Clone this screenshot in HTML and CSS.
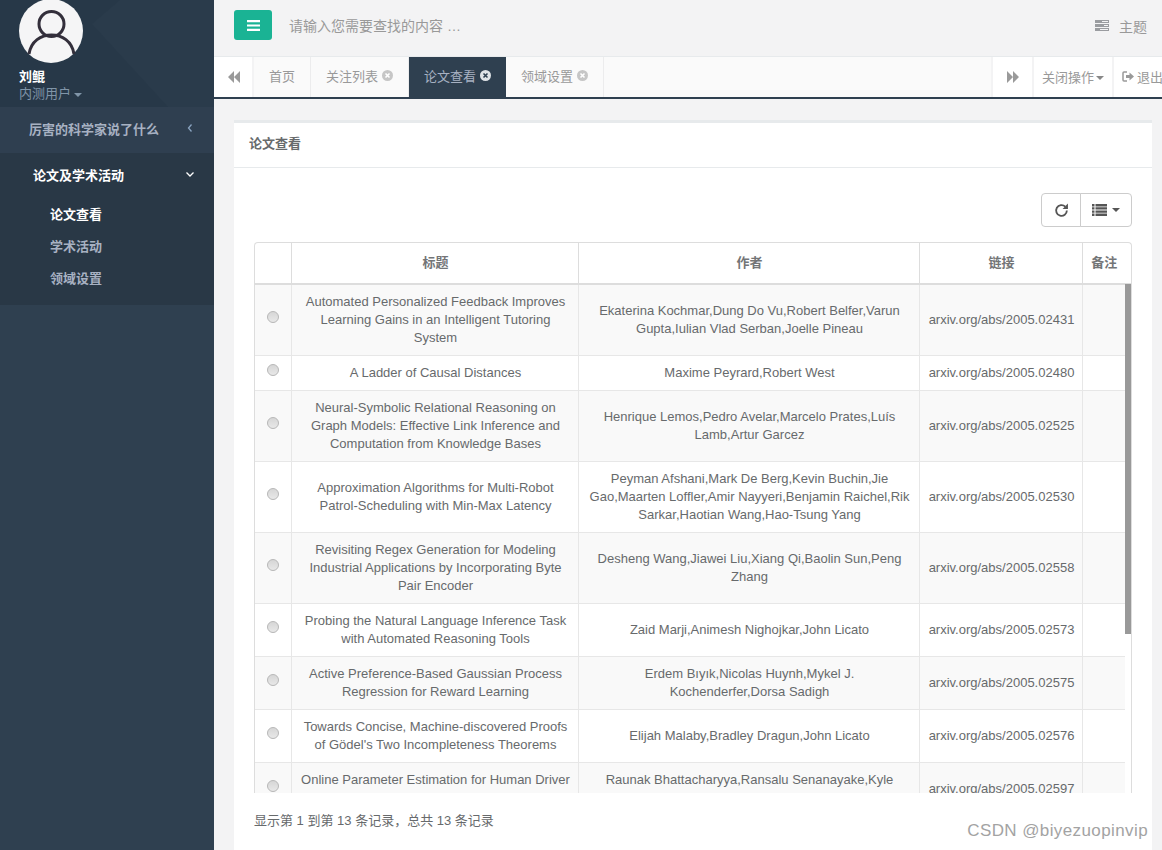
FILE: index.html
```html
<!DOCTYPE html>
<html lang="zh-CN">
<head>
<meta charset="utf-8">
<title>论文查看</title>
<link rel="stylesheet" href="styles.css">
</head>
<body>
<div class="app">
  <aside class="sidebar">
    <div class="profile">
      <svg class="shade" viewBox="0 0 214 107" width="214" height="107"><polygon points="92,24 120,0 214,0 214,107 168,107" fill="#2a3b4b"/></svg>
      <div class="avatar">
        <svg viewBox="0 0 64 64" width="64" height="64"><circle cx="32" cy="32" r="32" fill="#f5f5f6"/><circle cx="32.500" cy="25" r="12.500" fill="none" stroke="#332f3b" stroke-width="3"/><path d="M10 55 C12 42 22 36 32.500 36 C43 36 53 42 55 55" fill="none" stroke="#332f3b" stroke-width="3"/></svg>
      </div>
      <div class="user-name">刘鲲</div>
      <div class="user-role">内测用户<i class="caret"></i></div>
    </div>
    <div class="menu-top"><span>厉害的科学家说了什么</span>
      <svg viewBox="0 0 8 10" width="8" height="10"><path d="M5.500 1.500 2.500 5l3 3.500" fill="none" stroke="#8aa4c0" stroke-width="1.300"/></svg>
    </div>
    <div class="menu-group">
      <div class="menu-head"><span>论文及学术活动</span>
        <svg viewBox="0 0 10 8" width="10" height="8"><path d="M1.500 2.500 5 6l3.500-3.500" fill="none" stroke="#fff" stroke-width="1.300"/></svg>
      </div>
      <div class="menu-sub active">论文查看</div>
      <div class="menu-sub">学术活动</div>
      <div class="menu-sub">领域设置</div>
    </div>
  </aside>

  <main class="main">
    <header class="topbar">
      <button class="burger" type="button" aria-label="菜单">
        <svg viewBox="0 0 13 11" width="13" height="11"><path d="M0 0h13v2.200H0zM0 4.400h13v2.200H0zM0 8.800h13V11H0z" fill="#fff"/></svg>
      </button>
      <div class="search">请输入您需要查找的内容 …</div>
      <div class="theme">
        <svg viewBox="0 0 14 11" width="14" height="11"><path d="M0 0h14v3H0zM0 4h14v3H0zM0 8h14v3H0z" fill="#9a9ca0"/><path d="M7 1h6v1H7zM9 5h4v1H9zM5 9h8v1H5z" fill="#f3f3f4"/></svg>
        <span>主题</span>
      </div>
    </header>

    <nav class="tabs">
      <div class="tab-btn first">
        <svg viewBox="0 0 12 12" width="12" height="12"><path d="M6 0v12L0 6zM12 0v12L6 6z" fill="#9a9a9a"/></svg>
      </div>
      <div class="tab-list">
        <div class="tab home">首页</div>
        <div class="tab">关注列表<svg class="x" viewBox="0 0 11 11" width="11" height="11"><circle cx="5.500" cy="5.500" r="5.500" fill="#c6c6c6"/><path d="M3.500 3.500l4 4m0-4-4 4" stroke="#fff" stroke-width="1.600"/></svg></div>
        <div class="tab current">论文查看<svg class="x" viewBox="0 0 11 11" width="11" height="11"><circle cx="5.500" cy="5.500" r="5.500" fill="#dfe3e7"/><path d="M3.500 3.500l4 4m0-4-4 4" stroke="#2f4050" stroke-width="1.600"/></svg></div>
        <div class="tab">领域设置<svg class="x" viewBox="0 0 11 11" width="11" height="11"><circle cx="5.500" cy="5.500" r="5.500" fill="#c6c6c6"/><path d="M3.500 3.500l4 4m0-4-4 4" stroke="#fff" stroke-width="1.600"/></svg></div>
      </div>
      <div class="tab-btn last">
        <svg viewBox="0 0 12 12" width="12" height="12"><path d="M0 0v12l6-6zM6 0v12l6-6z" fill="#9a9a9a"/></svg>
      </div>
      <div class="tab-btn close-ops">关闭操作<i class="caret dark"></i></div>
      <div class="tab-btn logout">
        <svg viewBox="0 0 12 11" width="12" height="11"><path d="M5 1H2a1 1 0 0 0-1 1v7a1 1 0 0 0 1 1h3" fill="none" stroke="#999" stroke-width="1.500"/><path d="M4 4h3.500V1.500L12 5.500 7.500 9.500V7H4z" fill="#999"/></svg>
        <span>退出</span>
      </div>
    </nav>

    <section class="content">
      <div class="card">
        <div class="card-title">论文查看</div>
        <div class="card-body">
          <div class="toolbar">
            <button class="tool refresh" type="button" aria-label="刷新">
              <svg viewBox="0 0 14 14" width="15" height="15"><path d="M12 7a5 5 0 1 1-1.500-3.600" fill="none" stroke="#555" stroke-width="1.700"/><path d="M13 0.500v5H8z" fill="#555"/></svg>
            </button>
            <button class="tool columns" type="button" aria-label="列">
              <svg viewBox="0 0 15 12" width="15" height="12"><path d="M0 0h2.500v2.400H0zM0 3.200h2.500v2.400H0zM0 6.400h2.500v2.400H0zM0 9.600h2.500V12H0zM3.500 0H15v2.400H3.500zM3.500 3.200H15v2.400H3.500zM3.500 6.400H15v2.400H3.500zM3.500 9.600H15V12H3.500z" fill="#555"/></svg>
              <i class="caret darker"></i>
            </button>
          </div>

          <div class="grid">
            <table class="grid-head">
              <colgroup><col class="c-radio"><col class="c-title"><col class="c-author"><col class="c-link"><col></colgroup>
              <thead><tr><th></th><th>标题</th><th>作者</th><th>链接</th><th>备注</th></tr></thead>
            </table>
            <div class="grid-view">
              <table class="grid-body">
                <colgroup><col class="c-radio"><col class="c-title"><col class="c-author"><col class="c-link"><col></colgroup>
                <tbody>
                  <tr><td><i class="radio"></i></td><td>Automated Personalized Feedback Improves Learning Gains in an Intelligent Tutoring System</td><td>Ekaterina Kochmar,Dung Do Vu,Robert Belfer,Varun Gupta,Iulian Vlad Serban,Joelle Pineau</td><td>arxiv.org/abs/2005.02431</td><td></td></tr>
                  <tr><td><i class="radio"></i></td><td>A Ladder of Causal Distances</td><td>Maxime Peyrard,Robert West</td><td>arxiv.org/abs/2005.02480</td><td></td></tr>
                  <tr><td><i class="radio"></i></td><td>Neural-Symbolic Relational Reasoning on Graph Models: Effective Link Inference and Computation from Knowledge Bases</td><td>Henrique Lemos,Pedro Avelar,Marcelo Prates,Luís Lamb,Artur Garcez</td><td>arxiv.org/abs/2005.02525</td><td></td></tr>
                  <tr><td><i class="radio"></i></td><td>Approximation Algorithms for Multi-Robot Patrol-Scheduling with Min-Max Latency</td><td>Peyman Afshani,Mark De Berg,Kevin Buchin,Jie Gao,Maarten Loffler,Amir Nayyeri,Benjamin Raichel,Rik Sarkar,Haotian Wang,Hao-Tsung Yang</td><td>arxiv.org/abs/2005.02530</td><td></td></tr>
                  <tr><td><i class="radio"></i></td><td>Revisiting Regex Generation for Modeling Industrial Applications by Incorporating Byte Pair Encoder</td><td>Desheng Wang,Jiawei Liu,Xiang Qi,Baolin Sun,Peng Zhang</td><td>arxiv.org/abs/2005.02558</td><td></td></tr>
                  <tr><td><i class="radio"></i></td><td>Probing the Natural Language Inference Task with Automated Reasoning Tools</td><td>Zaid Marji,Animesh Nighojkar,John Licato</td><td>arxiv.org/abs/2005.02573</td><td></td></tr>
                  <tr><td><i class="radio"></i></td><td>Active Preference-Based Gaussian Process Regression for Reward Learning</td><td>Erdem Bıyık,Nicolas Huynh,Mykel J. Kochenderfer,Dorsa Sadigh</td><td>arxiv.org/abs/2005.02575</td><td></td></tr>
                  <tr><td><i class="radio"></i></td><td>Towards Concise, Machine-discovered Proofs of Gödel's Two Incompleteness Theorems</td><td>Elijah Malaby,Bradley Dragun,John Licato</td><td>arxiv.org/abs/2005.02576</td><td></td></tr>
                  <tr><td><i class="radio"></i></td><td>Online Parameter Estimation for Human Driver Behavior Prediction</td><td>Raunak Bhattacharyya,Ransalu Senanayake,Kyle Brown,Mykel Kochenderfer</td><td>arxiv.org/abs/2005.02597</td><td></td></tr>
                </tbody>
              </table>
            </div>
            <div class="thumb"></div>
          </div>
          <div class="pager">显示第 1 到第 13 条记录，总共 13 条记录</div>
        </div>
      </div>
    </section>
  </main>
</div>
<div class="watermark">CSDN @biyezuopinvip</div>
</body>
</html>
```
FILE: styles.css
```css
* { box-sizing: border-box; }
html, body { margin: 0; height: 100%; overflow: hidden; }
body {
  font-family: "Liberation Sans", "Noto Sans CJK SC", sans-serif;
  font-size: 13px;
  color: #676a6c;
  background: #f3f3f4;
}
.app { display: flex; height: 850px; }

/* sidebar */
.sidebar { width: 214px; flex: none; background: #2f4050; }
.profile {
  position: relative;
  height: 107px;
  padding-left: 19px;
  background: #273848;
  overflow: hidden;
}
.shade { position: absolute; left: 0; top: 0; }
.avatar { position: relative; height: 64px; margin-top: -1px; }
.avatar svg { display: block; margin-top: -1px; }
.user-name { position: relative; margin-top: 5px; line-height: 18px; font-weight: 700; color: #fff; }
.user-role { position: relative; margin-top: -1px; line-height: 18px; color: #8095a8; }
.caret {
  display: inline-block;
  width: 0; height: 0;
  margin-left: 3px;
  vertical-align: middle;
  border-top: 4px solid #8095a8;
  border-left: 4px solid transparent;
  border-right: 4px solid transparent;
}
.caret.dark { margin: 3px 0 0 2px; border-top-color: #888; }
.caret.darker { border-top-color: #555; margin-left: 5px; }
.menu-top {
  display: flex; align-items: center; justify-content: space-between;
  height: 46px;
  padding: 0 20px 4px 29px;
  background: #2f3f50;
  color: #a7b1c2;
  font-weight: 700;
}
.menu-group { height: 152px; background: #293846; }
.menu-head {
  display: flex; align-items: center; justify-content: space-between;
  height: 44px;
  padding: 0 19px 2px 33px;
  color: #fff;
  font-weight: 700;
}
.menu-sub { height: 32px; padding-left: 50px; line-height: 32px; color: #a7b1c2; font-weight: 700; }
.menu-sub:nth-child(2) { margin-top: 2px; }
.menu-sub.active { color: #fff; }

/* main */
.main { flex: 1; min-width: 0; display: flex; flex-direction: column; }
.topbar {
  display: flex; align-items: flex-start;
  height: 56px;
  padding: 10px 15px 0 20px;
}
.burger {
  width: 38px; height: 30px;
  padding: 0; border: 0; border-radius: 3px;
  background: #1ab394;
  display: flex; align-items: center; justify-content: center;
}
.search { margin-left: 17px; flex: 1; font-size: 14px; line-height: 32px; color: #999; }
.theme { display: flex; align-items: center; gap: 10px; height: 32px; padding-bottom: 1px; color: #999; font-size: 14px; }

.tabs {
  display: flex;
  height: 43px;
  background: #fafafa;
  border-top: 1px solid #e7eaec;
  border-bottom: 2px solid #2f4050;
}
.tab-btn {
  display: flex; align-items: center; justify-content: center;
  background: #fff;
  color: #999;
  flex: none;
}
.tab-btn.first { width: 40px; padding-left: 1px; border-right: 2px solid #f3f3f4; }
.tab-btn.last { width: 41px; border-left: 2px solid #f3f3f4; }
.tab-btn.close-ops { width: 80px; padding-bottom: 2px; border-left: 2px solid #f3f3f4; }
.tab-btn.logout { width: 50px; gap: 3px; justify-content: flex-start; padding: 0 0 2px 8px; border-left: 2px solid #f3f3f4; white-space: nowrap; overflow: hidden; }
.tab-btn.logout svg { flex: none; }
.tab-btn.logout span { flex: none; }
.tab-list { flex: 1; display: flex; min-width: 0; }
.tab {
  display: flex; align-items: center; gap: 4px;
  padding: 0 15px 4px 15px;
  border-right: 1px solid #ececed;
  color: #999;
  white-space: nowrap;
}
.tab .x { margin-top: 1px; }
.tab.home { padding: 0 15px 4px; }
.tab.current { background: #2f4050; color: #a7b1c2; border-right: 0; }
.x { flex: none; }

/* card */
.content { flex: 1; padding: 21px 10px 0 20px; min-height: 0; }
.card { height: 100%; background: #fff; border-top: 3px solid #e7eaec; }
.card-title {
  height: 45px;
  padding-left: 15px;
  line-height: 42px;
  font-weight: 700;
  color: #676a6c;
  border-bottom: 1px solid #e7eaec;
}
.card-body { padding: 25px 20px 0; }
.toolbar { display: flex; justify-content: flex-end; height: 34px; }
.tool {
  display: flex; align-items: center; justify-content: center;
  height: 34px; padding: 0;
  background: #fff;
  border: 1px solid #ccc;
}
.refresh { width: 40px; border-radius: 4px 0 0 4px; }
.columns { width: 52px; margin-left: -1px; border-radius: 0 4px 4px 0; }

.grid {
  position: relative;
  height: 551px;
  margin-top: 15px;
  overflow: hidden;
  border: 1px solid #ddd;
  border-bottom: 0;
  border-radius: 4px 4px 0 0;
}
table { border-collapse: collapse; table-layout: fixed; font-size: 13px; color: #676a6c; }
.grid-head { width: 876px; }
.grid-body { width: 870px; }
.c-radio { width: 36px; }
.c-title { width: 287px; }
.c-author { width: 341px; }
.c-link { width: 163px; }
.grid-head th {
  height: 41px;
  padding: 0 0 4px 2px;
  font-size: 13px;
  font-weight: 700;
  color: #737577;
  text-align: center;
  border-left: 1px solid #ddd;
  border-bottom: 2px solid #ddd;
}
.grid-head th:first-child { border-left: 0; }
.grid-head th:last-child { padding-right: 5px; padding-left: 0; }
.grid-view { height: 510px; overflow: hidden; }
.grid-body td {
  padding: 8px 7px 8px 9px;
  line-height: 18px;
  text-align: center;
  vertical-align: middle;
  border-left: 1px solid #e7e7e7;
  border-bottom: 1px solid #e7e7e7;
  word-wrap: break-word;
}
.grid-body td:first-child { border-left: 0; padding: 0; }
.grid-body tr:nth-child(odd) td { background: #f9f9f9; }
.radio {
  display: block;
  width: 12px; height: 12px;
  margin: -6px 0 0 12px;
  border-radius: 50%;
  border: 1px solid #b8b8b8;
  background: linear-gradient(#d6d6d6, #e8e8e8);
}
.thumb {
  position: absolute;
  right: 0; top: 41px;
  width: 6px; height: 350px;
  background: #999;
}
.pager { margin-top: 19px; font-size: 13px; line-height: 18px; color: #676a6c; }
.watermark {
  position: absolute;
  right: 14px; top: 821px;
  font-size: 17px;
  line-height: 20px;
  color: #a3a3a3;
  letter-spacing: 0.400px;
}
```
